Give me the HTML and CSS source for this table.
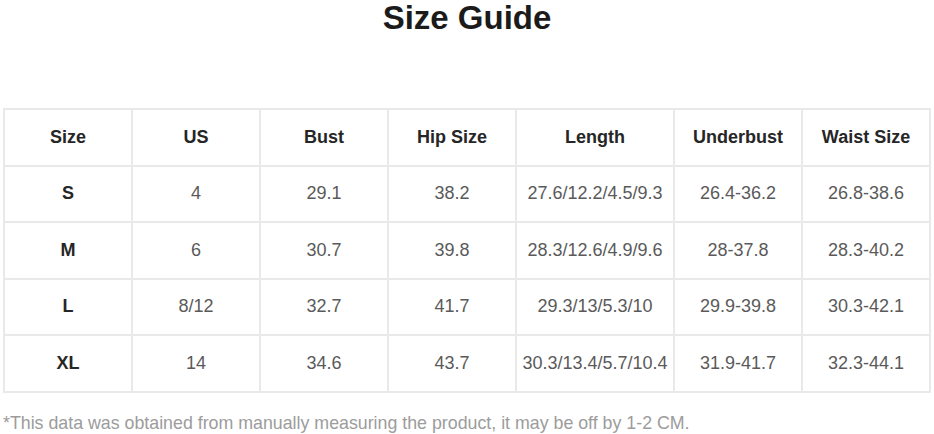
FILE: index.html
```html
<!DOCTYPE html>
<html lang="en">
<head>
<meta charset="utf-8">
<title>Size Guide</title>
<link rel="stylesheet" href="styles.css">
</head>
<body>
<h1 class="title">Size Guide</h1>
<table class="size-table">
  <colgroup>
    <col class="c-std"><col class="c-std"><col class="c-std"><col class="c-std"><col class="c-wide"><col class="c-std"><col class="c-std">
  </colgroup>
  <thead>
    <tr><th>Size</th><th>US</th><th>Bust</th><th>Hip Size</th><th>Length</th><th>Underbust</th><th>Waist Size</th></tr>
  </thead>
  <tbody>
    <tr><th>S</th><td>4</td><td>29.1</td><td>38.2</td><td>27.6/12.2/4.5/9.3</td><td>26.4-36.2</td><td>26.8-38.6</td></tr>
    <tr><th>M</th><td>6</td><td>30.7</td><td>39.8</td><td>28.3/12.6/4.9/9.6</td><td>28-37.8</td><td>28.3-40.2</td></tr>
    <tr><th>L</th><td>8/12</td><td>32.7</td><td>41.7</td><td>29.3/13/5.3/10</td><td>29.9-39.8</td><td>30.3-42.1</td></tr>
    <tr><th>XL</th><td>14</td><td>34.6</td><td>43.7</td><td>30.3/13.4/5.7/10.4</td><td>31.9-41.7</td><td>32.3-44.1</td></tr>
  </tbody>
</table>
<p class="note">*This data was obtained from manually measuring the product, it may be off by 1-2 CM.</p>
</body>
</html>
```
FILE: styles.css
```css
html, body {
  margin: 0;
  padding: 0;
  background: #ffffff;
}
body {
  font-family: "Liberation Sans", Arial, sans-serif;
  width: 934px;
}
.title {
  margin: 0 0 72px 0;
  font-size: 33px;
  line-height: 36px;
  font-weight: bold;
  color: #1b1b1b;
  text-align: center;
}
.size-table {
  margin-left: 3px;
  width: 926px;
  table-layout: fixed;
  border-collapse: collapse;
  border: 2px solid #e9e9e9;
}
.c-std { width: 128px; }
.c-wide { width: 158px; }
.size-table th,
.size-table td {
  height: 54.5px;
  padding: 0;
  border: 2px solid #e9e9e9;
  text-align: center;
  vertical-align: middle;
  font-size: 18px;
  white-space: nowrap;
}
.size-table th {
  font-weight: bold;
  color: #262626;
}
.size-table td {
  color: #5a5a5a;
}
.note {
  margin: 20px 0 0 3px;
  font-size: 17.8px;
  line-height: 20px;
  color: #9c9c9c;
}
```
